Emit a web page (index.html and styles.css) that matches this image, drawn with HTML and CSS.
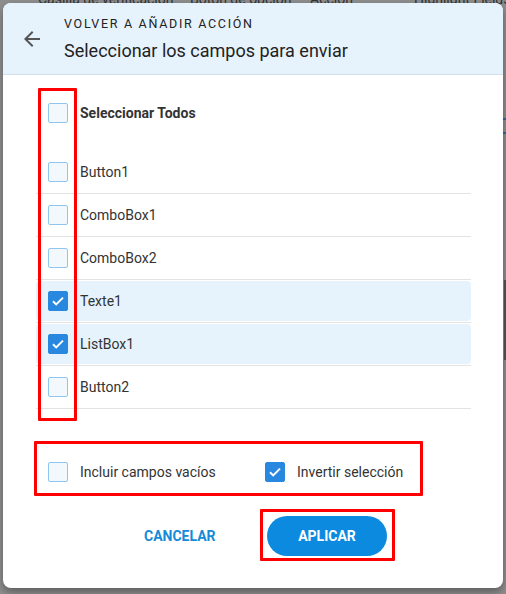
FILE: index.html
```html
<!DOCTYPE html>
<html lang="es">
<head>
<meta charset="utf-8">
<link rel="stylesheet" href="styles.css">
</head>
<body>
<div class="backdrop">
  <div class="bg-head">
    <span class="bh1">Casilla de verificación</span>
    <span class="bh2">Botón de opción</span>
    <span class="bh3">Acción</span>
    <span class="bh4">Highlight Fields</span>
  </div>
  <div class="bg-icon"></div>
  <div class="bg-thumb"></div>
</div>

<div class="modal">
  <header class="head">
    <svg class="back" width="24" height="24" viewBox="0 0 24 24"><path d="M20 11H7.83l5.59-5.59L12 4l-8 8 8 8 1.41-1.41L7.83 13H20v-2z" fill="#555"/></svg>
    <div class="titles">
      <div class="overline">VOLVER A AÑADIR ACCIÓN</div>
      <div class="title">Seleccionar los campos para enviar</div>
    </div>
  </header>

  <div class="body">
    <div class="all-row">
      <span class="cb"></span><span class="all-label">Seleccionar Todos</span>
    </div>
    <ul class="list">
      <li class="row"><div class="inner"><span class="cb"></span>Button1</div></li>
      <li class="row"><div class="inner"><span class="cb"></span>ComboBox1</div></li>
      <li class="row"><div class="inner"><span class="cb"></span>ComboBox2</div></li>
      <li class="row sel"><div class="inner"><span class="cb on"><svg viewBox="0 0 20 20" width="20" height="20"><path d="M5 10.2l3.2 3.2L15 6.6" fill="none" stroke="#fff" stroke-width="2"/></svg></span>Texte1</div></li>
      <li class="row sel"><div class="inner"><span class="cb on"><svg viewBox="0 0 20 20" width="20" height="20"><path d="M5 10.2l3.2 3.2L15 6.6" fill="none" stroke="#fff" stroke-width="2"/></svg></span>ListBox1</div></li>
      <li class="row"><div class="inner"><span class="cb"></span>Button2</div></li>
    </ul>

    <div class="options">
      <label class="opt opt1"><span class="cb"></span>Incluir campos vacíos</label>
      <label class="opt"><span class="cb on"><svg viewBox="0 0 20 20" width="20" height="20"><path d="M5 10.2l3.2 3.2L15 6.6" fill="none" stroke="#fff" stroke-width="2"/></svg></span>Invertir selección</label>
    </div>

    <div class="actions">
      <button class="btn-text">CANCELAR</button>
      <button class="btn-main">APLICAR</button>
    </div>
  </div>
</div>

<div class="mark mark-left"></div>
<div class="mark mark-opts"></div>
<div class="mark mark-btn"></div>
</body>
</html>
```

FILE: styles.css
```css
* { box-sizing: border-box; }
html, body {
  margin: 0;
  padding: 0;
  width: 506px;
  height: 594px;
  overflow: hidden;
  background: #8e8e8e;
  font-family: Roboto, "Liberation Sans", sans-serif;
  color: #333;
}
.backdrop {
  position: absolute;
  inset: 0;
}
.bg-head {
  position: absolute;
  top: -9px;
  left: 0;
  width: 506px;
  height: 14px;
  font-size: 14px;
  color: #333;
  white-space: nowrap;
}
.bg-head span { position: absolute; top: 0; }
.bh1 { left: 38px; }
.bh2 { left: 190px; }
.bh3 { left: 310px; }
.bh4 { left: 414px; }
.bg-icon {
  position: absolute;
  left: 503px;
  top: 118px;
  width: 3px;
  height: 16px;
  border-top: 2px solid #2e6aa6;
  border-bottom: 2px solid #2e6aa6;
}
.bg-thumb {
  position: absolute;
  left: 504px;
  top: 280px;
  width: 2px;
  height: 80px;
  background: #555;
}

.modal {
  position: absolute;
  left: 3px;
  top: 3px;
  width: 500px;
  height: 585px;
  background: #fff;
  border-radius: 8px;
  overflow: hidden;
  box-shadow: 0 4px 8px rgba(0,0,0,0.35);
}
.head {
  height: 72px;
  background: #e6f2fc;
  border-bottom: 1px solid #cfdfec;
  display: flex;
  align-items: center;
}
.back {
  margin-left: 17px;
  margin-right: 20px;
  margin-top: 0;
  flex: none;
}
.titles {
  display: flex;
  flex-direction: column;
  gap: 9px;
  margin-top: -1px;
}
.overline {
  font-size: 12.5px;
  letter-spacing: 1.7px;
  color: #222;
  line-height: 15px;
}
.title {
  font-size: 18px;
  color: #222;
  line-height: 21px;
}

.body {
  padding: 17px 29px 0 33px;
}
.cb {
  width: 20px;
  height: 20px;
  flex: none;
  border: 1px solid #8fc6ef;
  background: #f3f8fd;
  border-radius: 2px;
  margin-right: 12px;
  display: inline-flex;
}
.cb.on {
  background: #2887df;
  border-color: #2887df;
}
.cb.on svg { margin: -1px; }

.all-row {
  height: 42px;
  display: flex;
  align-items: center;
  padding-left: 12px;
  margin-bottom: 17px;
}
.all-label {
  font-weight: bold;
  font-size: 14px;
  color: #333;
}
.list {
  list-style: none;
  margin: 0;
  padding: 0;
  width: 435px;
}
.row {
  height: 43px;
  border-bottom: 1px solid #e3e3e3;
  padding: 1px 0;
}
.inner {
  height: 40px;
  display: flex;
  align-items: center;
  padding-left: 12px;
  font-size: 14px;
  color: #333;
  border-radius: 4px;
}
.row.sel .inner { background: #e6f3fd; }

.options {
  display: flex;
  align-items: center;
  padding-left: 12px;
  margin-top: 43px;
  height: 40px;
}
.opt {
  display: flex;
  align-items: center;
  font-size: 14px;
  color: #333;
}
.opt1 { width: 217px; }

.actions {
  display: flex;
  align-items: center;
  margin-top: 24px;
  padding-left: 108px;
}
button {
  font-family: Roboto, "Liberation Sans", sans-serif;
  font-weight: bold;
  font-size: 14px;
  border: none;
  cursor: pointer;
}
.btn-text {
  background: none;
  color: #168ad9;
  padding: 0;
  width: 123px;
  text-align: left;
  height: 40px;
}
.btn-main {
  background: #0b8ae0;
  color: #fff;
  width: 120px;
  height: 40px;
  border-radius: 20px;
}

.mark {
  position: absolute;
  border: 3px solid #f00;
  border-radius: 1px;
}
.mark-left { left: 38px; top: 88px; width: 39px; height: 333px; }
.mark-opts { left: 34px; top: 441px; width: 389px; height: 55px; }
.mark-btn { left: 260px; top: 509px; width: 135px; height: 52px; }
```
